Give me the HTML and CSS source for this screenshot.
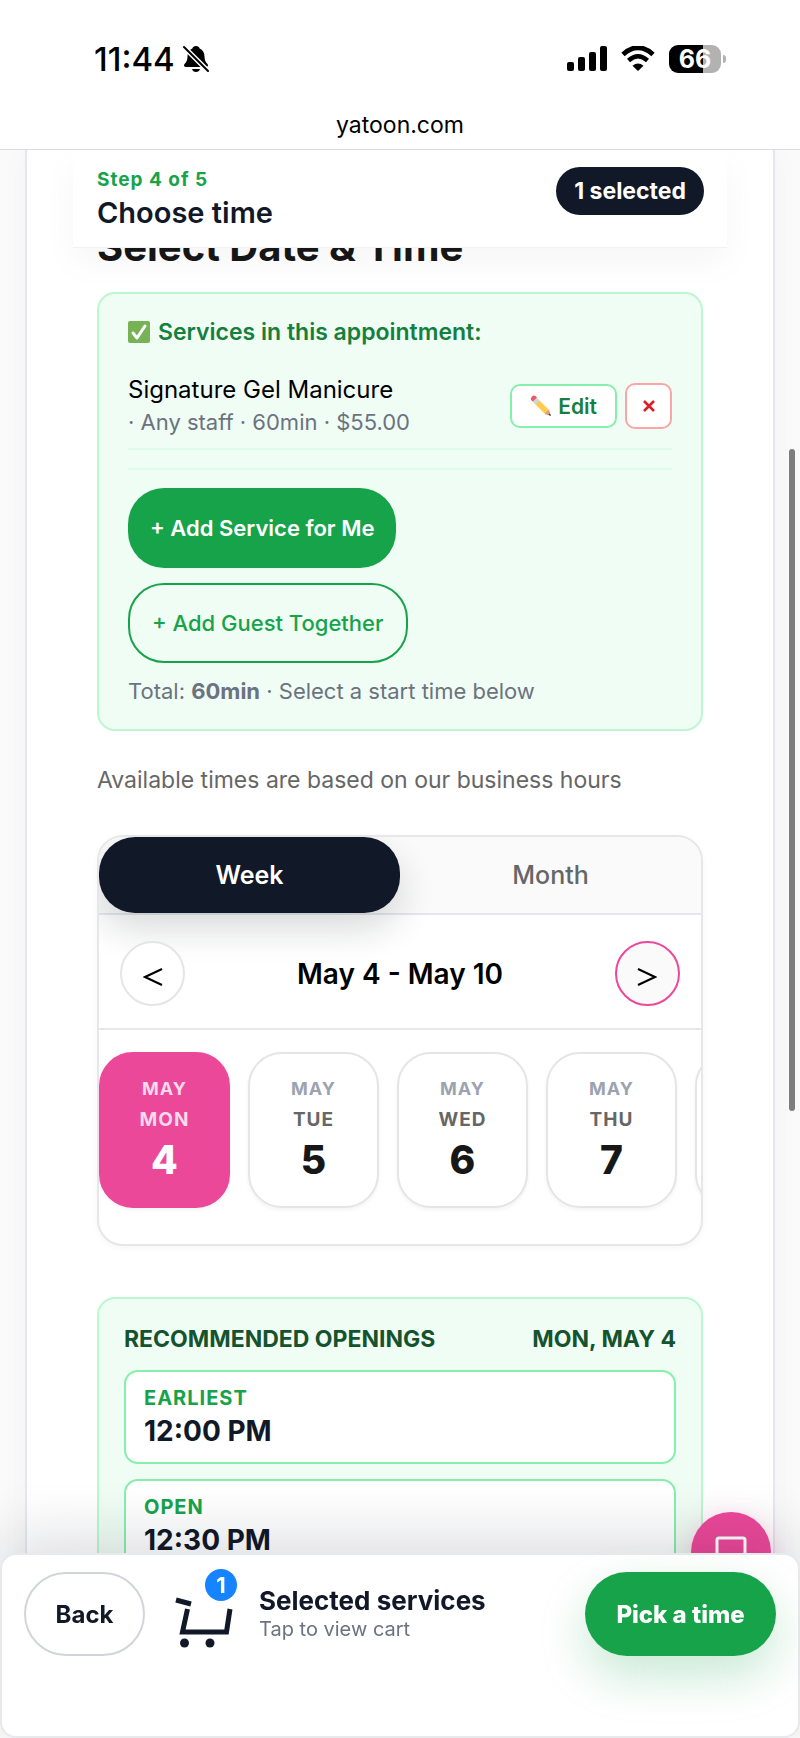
FILE: index.html
```html
<!DOCTYPE html>
<html lang="en">
<head>
    <meta charset="UTF-8">
    <meta name="viewport" content="width=device-width, initial-scale=1.0">
    <title>Choose time - yatoon.com</title>
    <link rel="stylesheet" href="styles.css">
</head>
<body>
    <!-- Phone status bar and address -->
    <header class="browser-bar">
        <div class="status-bar">
            <div class="status-left">
                <span class="clock">11:44</span>
                <svg class="bell-icon" width="26" height="28" viewBox="0 0 26 28" aria-hidden="true">
                    <path d="M13 1c-2 0-3.300 1.200-3.600 2.600C6 5 4.500 8 4.500 11.500c0 4-1.200 5.600-3 7.600-.9 1-.6 2.900 1 2.900h21c1.600 0 1.900-1.900 1-2.900-1.800-2-3-3.600-3-7.600C21.500 8 20 5 16.600 3.600 16.300 2.200 15 1 13 1z"/>
                    <path d="M9 24h8c-.5 1.900-2 3-4 3s-3.500-1.100-4-3z"/>
                    <path d="M1 2L25 26" stroke="#fff" stroke-width="5"/>
                    <path d="M1 2L25 26" stroke="#000" stroke-width="2" stroke-linecap="round"/>
                </svg>
            </div>
            <div class="status-right">
                <svg width="40" height="26" viewBox="0 0 40 26" aria-hidden="true">
                    <rect x="0" y="16" width="7" height="9" rx="2"/>
                    <rect x="11" y="11" width="7" height="14" rx="2"/>
                    <rect x="22" y="6" width="7" height="19" rx="2"/>
                    <rect x="33" y="0" width="7" height="25" rx="2"/>
                </svg>
                <svg width="34" height="26" viewBox="0 0 34 26" aria-hidden="true">
                    <path d="M2 8.500Q17-5 32 8.500" fill="none" stroke="#000" stroke-width="5"/>
                    <path d="M7.500 14.500Q17 6 26.500 14.500" fill="none" stroke="#000" stroke-width="4.500"/>
                    <path d="M17 25l-5.500-5.300q5.500-4.200 11 0z"/>
                </svg>
                <div class="battery"><span class="battery-level">66</span></div>
            </div>
        </div>
        <div class="address">yatoon.com</div>
    </header>

    <!-- Booking page -->
    <main class="booking">
        <div class="step-bar">
            <div>
                <div class="step-count">Step 4 of 5</div>
                <div class="step-name">Choose time</div>
            </div>
            <span class="selected-pill">1 selected</span>
        </div>

        <div class="booking-content">
            <h1 class="page-title">Select Date &amp; Time</h1>

            <!-- Services -->
            <section class="services-card">
                <h2 class="services-title">
                    <svg width="22" height="22" viewBox="0 0 22 22" aria-hidden="true">
                        <rect width="22" height="22" rx="2" fill="#77b255"/>
                        <path d="M5 12l4 5L17 5" fill="none" stroke="#fff" stroke-width="3" stroke-linecap="round" stroke-linejoin="round"/>
                    </svg>
                    Services in this appointment:
                </h2>
                <div class="service-row">
                    <div class="service-info">
                        <div class="service-name">Signature Gel Manicure</div>
                        <div class="service-meta">· Any staff · 60min · $55.00</div>
                    </div>
                    <button type="button" class="edit-btn">
                        <svg width="22" height="22" viewBox="0 0 22 22" aria-hidden="true">
                            <path d="M4.500 8.500L8.500 4.500 19 15l-4 4z" fill="#ffcc4d"/>
                            <path d="M19 14.500l2 6.500-6.500-2z" fill="#d99e82"/>
                            <path d="M19.800 18.500l1.200 2.500-2.500-1.200z" fill="#292f33"/>
                            <path d="M2.500 6.500l4-4 3 3-4 4z" fill="#ccd6dd"/>
                            <path d="M1 5q-.8-2 1-3.500 1.500-1.500 3.500-.5l1.500 1.500-4 4z" fill="#ea596e"/>
                        </svg>
                        Edit
                    </button>
                    <button type="button" class="remove-btn" aria-label="Remove service">
                        <svg width="12" height="12" viewBox="0 0 12 12" aria-hidden="true">
                            <path d="M1 1l10 10M11 1L1 11" stroke="#dc1f26" stroke-width="2.600"/>
                        </svg>
                    </button>
                </div>
                <div class="service-actions">
                    <button type="button" class="add-service-btn">+ Add Service for Me</button>
                    <button type="button" class="add-guest-btn">+ Add Guest Together</button>
                </div>
                <p class="services-total">Total: <strong>60min</strong> · Select a start time below</p>
            </section>

            <p class="hours-note">Available times are based on our business hours</p>

            <!-- Calendar -->
            <section class="calendar">
                <div class="calendar-tabs">
                    <button type="button" class="tab active">Week</button>
                    <button type="button" class="tab">Month</button>
                </div>
                <div class="calendar-nav">
                    <button type="button" class="nav-btn" aria-label="Previous week">
                        <svg width="20" height="20" viewBox="0 0 20 20" aria-hidden="true">
                            <path d="M19 2L2 10l17 8"/>
                        </svg>
                    </button>
                    <div class="calendar-range">May 4 - May 10</div>
                    <button type="button" class="nav-btn next" aria-label="Next week">
                        <svg width="20" height="20" viewBox="0 0 20 20" aria-hidden="true">
                            <path d="M1 2l17 8-17 8"/>
                        </svg>
                    </button>
                </div>
                <div class="days">
                    <button type="button" class="day active">
                        <span class="day-month">MAY</span>
                        <span class="day-name">MON</span>
                        <span class="day-number">4</span>
                    </button>
                    <button type="button" class="day">
                        <span class="day-month">MAY</span>
                        <span class="day-name">TUE</span>
                        <span class="day-number">5</span>
                    </button>
                    <button type="button" class="day">
                        <span class="day-month">MAY</span>
                        <span class="day-name">WED</span>
                        <span class="day-number">6</span>
                    </button>
                    <button type="button" class="day">
                        <span class="day-month">MAY</span>
                        <span class="day-name">THU</span>
                        <span class="day-number">7</span>
                    </button>
                    <button type="button" class="day" aria-label="Friday, May 8"></button>
                </div>
            </section>

            <!-- Openings -->
            <section class="openings">
                <div class="openings-header">
                    <h2>RECOMMENDED OPENINGS</h2>
                    <span>MON, MAY 4</span>
                </div>
                <button type="button" class="slot">
                    <span class="slot-label">EARLIEST</span>
                    <span class="slot-time">12:00 PM</span>
                </button>
                <button type="button" class="slot">
                    <span class="slot-label">OPEN</span>
                    <span class="slot-time">12:30 PM</span>
                </button>
            </section>
        </div>
    </main>

    <div class="scroll-thumb"></div>

    <button type="button" class="chat-btn" aria-label="Chat">
        <svg width="32" height="32" viewBox="0 0 32 32" aria-hidden="true">
            <path d="M4 2h24q2 0 2 2v19q0 2-2 2H9l-7 6V4q0-2 2-2z" fill="none" stroke="#fff" stroke-width="3" stroke-linejoin="round"/>
        </svg>
    </button>

    <!-- Cart bar -->
    <footer class="cart-bar">
        <button type="button" class="back-btn">Back</button>
        <button type="button" class="cart-summary">
            <span class="cart-icon">
                <svg width="58" height="52" viewBox="0 0 58 52" fill="none" stroke="#111827" aria-hidden="true">
                    <path d="M1 3l15 4" stroke-width="5"/>
                    <path d="M12.500 12L7.500 35H51.500L55 12" stroke-width="5"/>
                    <circle cx="9.500" cy="46" r="4.500" fill="#111827" stroke="none"/>
                    <circle cx="35" cy="46" r="4.500" fill="#111827" stroke="none"/>
                </svg>
                <span class="cart-badge">1</span>
            </span>
            <span class="cart-text">
                <span class="cart-title">Selected services</span>
                <span class="cart-hint">Tap to view cart</span>
            </span>
        </button>
        <button type="button" class="pick-btn">Pick a time</button>
    </footer>
</body>
</html>
```
FILE: styles.css
```css
/* Global Styling */
* {
    box-sizing: border-box;
}
html, body {
    height: 100%;
    overflow: hidden;
}
body {
    margin: 0;
    display: flex;
    flex-direction: column;
    background-color: #fafafa;
    color: #111827;
    font-family: Inter, "Liberation Sans", sans-serif;
    font-size: 22px;
}
h1, h2, p {
    margin: 0;
}
button {
    padding: 0;
    border: none;
    background: none;
    color: inherit;
    font: inherit;
    cursor: pointer;
}
svg {
    display: block;
    flex: none;
}

/* Status bar */
.browser-bar {
    flex: none;
    height: 150px;
    background-color: #fff;
    border-bottom: 1px solid #dcdce0;
    color: #000;
    position: relative;
    z-index: 3;
}
.status-bar {
    display: flex;
    justify-content: space-between;
    align-items: center;
    padding: 40px 74px 0 94px;
}
.status-left {
    display: flex;
    align-items: center;
    gap: 8px;
}
.clock {
    font-size: 33px;
    line-height: 38px;
    font-weight: 500;
}
.status-right {
    display: flex;
    align-items: center;
    gap: 14px;
}
.battery {
    display: flex;
    align-items: center;
    gap: 2px;
}
.battery-level {
    width: 52px;
    border-radius: 9px;
    background: linear-gradient(to right, #000 66%, #b2b2b2 66%);
    color: #fff;
    font-size: 25px;
    line-height: 28px;
    font-weight: 700;
    text-align: center;
}
.battery::after {
    content: "";
    width: 3px;
    height: 8px;
    border-radius: 0 4px 4px 0;
    background-color: #b2b2b2;
}
.address {
    margin-top: 32px;
    font-size: 23px;
    line-height: 30px;
    font-weight: 400;
    text-align: center;
}

/* Booking container */
.booking {
    flex: 1;
    min-height: 0;
    margin: 0 25px;
    border: 2px solid #e5e7ef;
    border-top: none;
    border-bottom: none;
    background-color: #fff;
    box-shadow: 0 0 30px rgba(15, 23, 42, 0.03);
}
.step-bar {
    position: relative;
    z-index: 2;
    display: flex;
    justify-content: space-between;
    align-items: flex-start;
    margin: 0 46px;
    padding: 16px 23px 15px 24px;
    background-color: #fff;
    border-bottom: 1px solid #f1f2f4;
    box-shadow: 0 14px 36px rgba(15, 23, 42, 0.04);
}
.step-count {
    color: #16a34a;
    font-size: 19px;
    line-height: 28px;
    font-weight: 700;
    letter-spacing: 1px;
}
.step-name {
    font-size: 29px;
    line-height: 38px;
    font-weight: 600;
}
.selected-pill {
    margin-top: 1px;
    padding: 0 18px;
    border-radius: 24px;
    background-color: #111827;
    color: #fff;
    font-size: 23px;
    line-height: 48px;
    font-weight: 700;
}
.booking-content {
    padding: 0 70px;
}
.page-title {
    margin-top: -25px;
    color: #171717;
    font-size: 40px;
    line-height: 48px;
    font-weight: 700;
}

/* Services */
.services-card {
    margin-top: 21px;
    padding: 23px 29px 22px;
    border: 2px solid #bbf7d0;
    border-radius: 18px;
    background-color: #f0fdf4;
}
.services-title {
    display: flex;
    align-items: center;
    gap: 8px;
    color: #15803d;
    font-size: 23px;
    line-height: 30px;
    font-weight: 600;
}
.service-row {
    display: flex;
    align-items: center;
    gap: 8px;
    margin-top: 22px;
    padding: 5px 0 10px;
    border-bottom: 2px solid #dcfce7;
}
.service-info {
    flex: 1;
}
.service-name {
    color: #000;
    font-size: 24px;
    line-height: 32px;
}
.service-meta {
    color: #6b7280;
    font-size: 22px;
    line-height: 32px;
}
.edit-btn {
    display: flex;
    align-items: center;
    gap: 6px;
    height: 44px;
    padding: 0 18px;
    border: 2px solid #86efac;
    border-radius: 10px;
    background-color: #fff;
    color: #15803d;
    font-size: 21px;
    font-weight: 600;
}
.remove-btn {
    display: flex;
    align-items: center;
    justify-content: center;
    width: 47px;
    height: 46px;
    border: 2px solid #fca5a5;
    border-radius: 10px;
    background-color: #fff;
}
.service-actions {
    display: flex;
    flex-direction: column;
    align-items: flex-start;
    gap: 15px;
    margin-top: 18px;
    padding-top: 18px;
    border-top: 2px solid #dcfce7;
}
.add-service-btn,
.add-guest-btn {
    height: 80px;
    padding: 0 22px;
    border-radius: 36px;
    background-color: #16a34a;
    color: #fff;
    font-size: 22px;
    font-weight: 600;
}
.add-guest-btn {
    border: 2px solid #16a34a;
    background-color: transparent;
    color: #16a34a;
    font-weight: 500;
}
.services-total {
    margin-top: 12px;
    color: #6b7280;
    line-height: 32px;
}

.hours-note {
    margin-top: 33px;
    color: #666;
    font-size: 23px;
    line-height: 32px;
}

/* Calendar */
.calendar {
    margin-top: 39px;
    border: 2px solid #e5e7eb;
    border-radius: 26px;
    background-color: #fff;
    box-shadow: 0 2px 6px rgba(15, 23, 42, 0.04);
    overflow: hidden;
}
.calendar-tabs {
    display: flex;
    border-bottom: 2px solid #e5e7eb;
    background-color: #fafafa;
}
.tab {
    flex: 1;
    height: 76px;
    border-radius: 36px;
    color: #666;
    font-size: 25px;
    font-weight: 500;
}
.tab.active {
    background-color: #111827;
    box-shadow: 0 16px 36px rgba(17, 24, 32, 0.16);
    color: #fff;
    font-weight: 600;
}
.calendar-nav {
    display: flex;
    justify-content: space-between;
    align-items: center;
    padding: 26px 21px 22px;
    border-bottom: 2px solid #e5e7eb;
}
.nav-btn {
    display: flex;
    align-items: center;
    justify-content: center;
    width: 65px;
    height: 65px;
    padding-top: 6px;
    border: 2px solid #e5e5e5;
    border-radius: 50%;
    background-color: #fff;
}
.nav-btn path {
    fill: none;
    stroke: #000;
    stroke-width: 2;
}
.nav-btn.next {
    border-color: #ec4899;
    background-color: #fafafa;
}
.calendar-range {
    color: #000;
    font-size: 28px;
    line-height: 38px;
    font-weight: 600;
}
.days {
    display: flex;
    gap: 18px;
    padding: 22px 0 36px;
}
.day {
    flex: none;
    display: flex;
    flex-direction: column;
    align-items: center;
    width: 131px;
    height: 156px;
    padding-top: 20px;
    border: 2px solid #e5e5e5;
    border-radius: 34px;
    background-color: #fff;
    box-shadow: 0 2px 4px rgba(15, 23, 42, 0.05);
}
.day-month {
    color: #9ca3af;
    font-size: 18px;
    line-height: 30px;
    font-weight: 700;
    letter-spacing: 1px;
}
.day-name {
    color: #666;
    font-size: 19px;
    line-height: 32px;
    font-weight: 700;
    letter-spacing: 1px;
}
.day-number {
    color: #171717;
    font-size: 39px;
    line-height: 48px;
    font-weight: 800;
}
.day.active {
    border-color: #ec4899;
    background-color: #ec4899;
}
.day.active .day-month,
.day.active .day-name {
    color: #fbdaeb;
}
.day.active .day-number {
    color: #fff;
}

/* Openings */
.openings {
    display: flex;
    flex-direction: column;
    gap: 15px;
    margin-top: 51px;
    padding: 24px 25px 60px;
    border: 2px solid #bbf7d0;
    border-radius: 18px;
    background-color: #f0fdf4;
}
.openings-header {
    display: flex;
    justify-content: space-between;
    color: #14532d;
    font-size: 23px;
    font-weight: 700;
    line-height: 32px;
}
.openings-header h2 {
    font-size: 23px;
    font-weight: 700;
}
.slot {
    display: flex;
    flex-direction: column;
    align-items: flex-start;
    height: 94px;
    padding: 11px 18px;
    border: 2px solid #86efac;
    border-radius: 14px;
    background-color: #fff;
}
.slot-label {
    color: #16a34a;
    font-size: 20px;
    line-height: 30px;
    font-weight: 700;
    letter-spacing: 1px;
}
.slot-time {
    font-size: 28px;
    line-height: 36px;
    font-weight: 700;
}

/* Floating parts */
.scroll-thumb {
    position: fixed;
    top: 449px;
    right: 5px;
    width: 6px;
    height: 662px;
    border-radius: 3px;
    background-color: #7d7d7d;
}
.chat-btn {
    position: fixed;
    right: 29px;
    bottom: 146px;
    display: flex;
    align-items: center;
    justify-content: center;
    width: 80px;
    height: 80px;
    border-radius: 50%;
    background-color: #ec4899;
    box-shadow: 0 6px 24px rgba(236, 72, 153, 0.25);
}

/* Cart bar */
.cart-bar {
    position: fixed;
    right: 0;
    bottom: 0;
    left: 0;
    display: flex;
    align-items: center;
    padding: 17px 22px 80px;
    border: 2px solid #e8e9ec;
    border-radius: 16px;
    background-color: #fff;
    box-shadow: 0 -16px 60px rgba(15, 23, 42, 0.14);
}
.back-btn {
    width: 121px;
    height: 84px;
    border: 2px solid #d1d5db;
    border-radius: 42px;
    font-size: 24px;
    font-weight: 700;
}
.cart-summary {
    flex: 1;
    display: flex;
    align-items: center;
    gap: 26px;
    margin-left: 30px;
    text-align: left;
}
.cart-icon {
    position: relative;
    padding-top: 18px;
}
.cart-badge {
    position: absolute;
    top: -10px;
    right: -4px;
    width: 32px;
    height: 32px;
    border-radius: 50%;
    background-color: #1683ff;
    color: #fff;
    font-size: 22px;
    line-height: 32px;
    font-weight: 700;
    text-align: center;
}
.cart-text {
    display: flex;
    flex-direction: column;
}
.cart-title {
    font-size: 26px;
    line-height: 30px;
    font-weight: 700;
}
.cart-hint {
    color: #6b7280;
    font-size: 20px;
    line-height: 26px;
}
.pick-btn {
    width: 191px;
    height: 84px;
    border-radius: 42px;
    background-color: #16a34a;
    box-shadow: 0 20px 48px rgba(22, 163, 74, 0.24);
    color: #fff;
    font-size: 24px;
    font-weight: 800;
}
```
